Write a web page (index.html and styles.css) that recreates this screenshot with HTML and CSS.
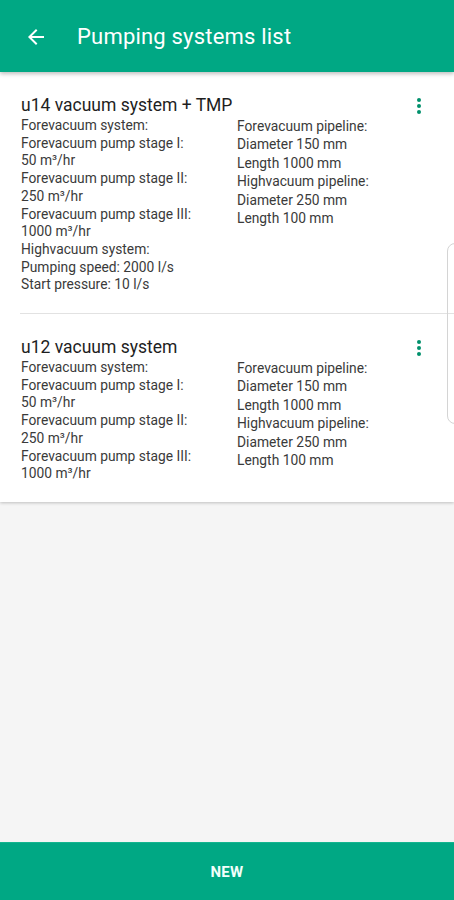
FILE: index.html
```html
<!DOCTYPE html>
<html lang="en">
<head>
  <meta charset="UTF-8" />
  <meta name="viewport" content="width=device-width, initial-scale=1.0"/>
  <title>Pumping systems list</title>
  <link rel="stylesheet" href="styles.css">
</head>
<body>
  <div class="app">
    <!-- Toolbar -->
    <header class="toolbar">
      <svg class="back" width="24" height="24" viewBox="0 0 24 24">
        <path d="M20 11H7.83l5.59-5.59L12 4l-8 8 8 8 1.41-1.41L7.83 13H20v-2z" fill="#fff"/>
      </svg>
      <h1>Pumping systems list</h1>
    </header>

    <!-- List -->
    <main class="content">
      <div class="card">
        <div class="item">
          <div class="item-head">
            <h2>u14 vacuum system + TMP</h2>
            <span class="menu"><i></i><i></i><i></i></span>
          </div>
          <div class="cols">
            <div class="col left">
              <p>Forevacuum system:</p>
              <p>Forevacuum pump stage I:</p>
              <p>50 m³/hr</p>
              <p>Forevacuum pump stage II:</p>
              <p>250 m³/hr</p>
              <p>Forevacuum pump stage III:</p>
              <p>1000 m³/hr</p>
              <p>Highvacuum system:</p>
              <p>Pumping speed: 2000 l/s</p>
              <p>Start pressure: 10 l/s</p>
            </div>
            <div class="col right">
              <p>Forevacuum pipeline:</p>
              <p>Diameter 150 mm</p>
              <p>Length 1000 mm</p>
              <p>Highvacuum pipeline:</p>
              <p>Diameter 250 mm</p>
              <p>Length 100 mm</p>
            </div>
          </div>
        </div>

        <div class="item">
          <div class="item-head">
            <h2>u12 vacuum system</h2>
            <span class="menu"><i></i><i></i><i></i></span>
          </div>
          <div class="cols">
            <div class="col left">
              <p>Forevacuum system:</p>
              <p>Forevacuum pump stage I:</p>
              <p>50 m³/hr</p>
              <p>Forevacuum pump stage II:</p>
              <p>250 m³/hr</p>
              <p>Forevacuum pump stage III:</p>
              <p>1000 m³/hr</p>
            </div>
            <div class="col right">
              <p>Forevacuum pipeline:</p>
              <p>Diameter 150 mm</p>
              <p>Length 1000 mm</p>
              <p>Highvacuum pipeline:</p>
              <p>Diameter 250 mm</p>
              <p>Length 100 mm</p>
            </div>
          </div>
        </div>
      </div>
    </main>

    <button class="new-btn" type="button">NEW</button>

    <!-- edge panel handle overlay -->
    <div class="edge-handle"></div>
  </div>
</body>
</html>
```

FILE: styles.css
```css
:root {
  --primary-color: #00a884;
  --accent-color: #00906c;
  --bg-color: #f5f5f5;
  --text-color: #2a2a2a;
  --font-sans: Roboto, "Noto Sans", Arial, sans-serif;
}

body {
  font-family: var(--font-sans);
  background-color: var(--bg-color);
  color: var(--text-color);
  margin: 0;
  padding: 0;
}

.app {
  position: relative;
  height: 900px;
  display: flex;
  flex-direction: column;
  overflow: hidden;
}

.toolbar {
  position: relative;
  z-index: 2;
  height: 72px;
  background-color: var(--primary-color);
  display: flex;
  align-items: center;
  padding: 0 0 0 24px;
  box-sizing: border-box;
  box-shadow: 0 2px 4px rgba(0, 0, 0, 0.25);
}

.toolbar .back {
  flex: none;
  margin-top: 2px;
}

.toolbar h1 {
  margin: 0 0 0 29px;
  color: #fff;
  font-size: 22px;
  font-weight: 400;
  letter-spacing: 0.2px;
}

.content {
  flex: 1;
}

.card {
  background-color: #fff;
  box-shadow: 0 1px 3px rgba(0, 0, 0, 0.22);
}

.item {
  padding: 22px 0 19px 21px;
}

.item + .item {
  border-top: 1px solid #e2e2e2;
  margin-left: 20px;
  padding-left: 1px;
}

.item-head {
  display: flex;
  align-items: center;
  justify-content: space-between;
  padding-right: 33px;
}

.item h2 {
  margin: 0 0 1px;
  font-size: 17.5px;
  line-height: 22px;
  font-weight: 400;
  color: #1e1e1e;
}

.menu {
  display: flex;
  flex-direction: column;
  gap: 2px;
}

.menu i {
  width: 4px;
  height: 4px;
  border-radius: 50%;
  background-color: var(--accent-color);
}

.cols {
  display: grid;
  grid-template-columns: 216px 1fr;
}

.col p {
  margin: 0;
  font-size: 13.8px;
  color: #3a3a3a;
  white-space: nowrap;
}

.left p {
  line-height: 17.7px;
}

.right p {
  line-height: 18.4px;
}

.new-btn {
  flex: none;
  height: 58px;
  width: 100%;
  border: none;
  border-top: 1px solid #13b58f;
  background-color: var(--primary-color);
  color: #f2fffb;
  font-family: var(--font-sans);
  font-size: 15px;
  font-weight: 700;
  letter-spacing: 0.3px;
  padding: 0;
  cursor: pointer;
}

.edge-handle {
  position: absolute;
  left: 447px;
  top: 243px;
  width: 20px;
  height: 179px;
  border: 1px solid #d4d4d4;
  border-radius: 8px;
  z-index: 3;
}
```
